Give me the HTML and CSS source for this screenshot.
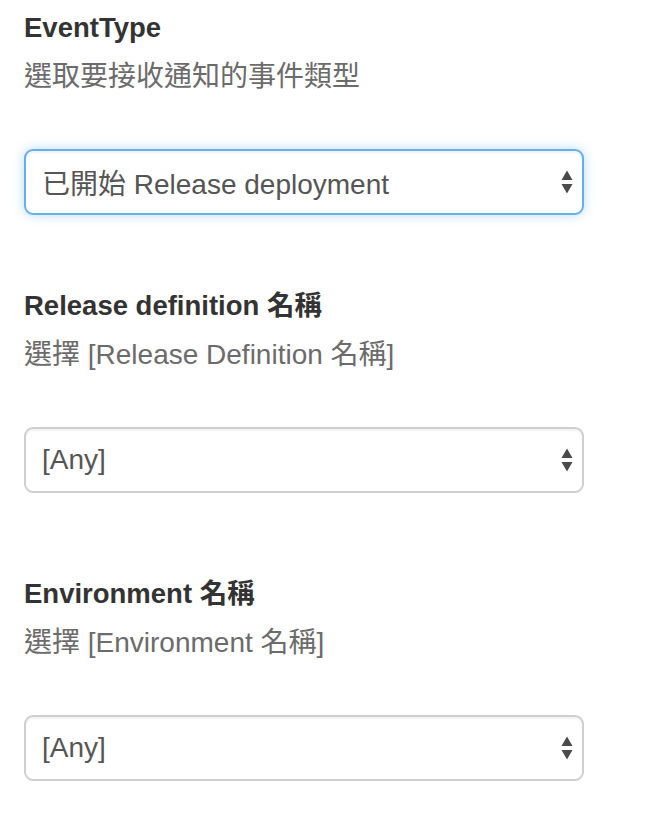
FILE: index.html
```html
<!DOCTYPE html>
<html lang="zh-Hant">
<head>
<meta charset="utf-8">
<title>Release notification settings</title>
<link rel="stylesheet" href="styles.css">
</head>
<body>
<main class="form">
  <section class="field">
    <div class="field-label">EventType</div>
    <div class="field-help">選取要接收通知的事件類型</div>
    <div class="select select--focus" role="combobox" aria-expanded="false">
      <span class="select-value">已開始 Release deployment</span>
      <svg class="select-arrows" width="14" height="26" viewBox="0 0 14 26" aria-hidden="true"><path d="M7 1.5 L12.5 11 L1.5 11 Z M1.5 15 L12.5 15 L7 24.5 Z"/></svg>
    </div>
  </section>
  <section class="field field--gap-sm">
    <div class="field-label">Release definition 名稱</div>
    <div class="field-help">選擇 [Release Definition 名稱]</div>
    <div class="select" role="combobox" aria-expanded="false">
      <span class="select-value">[Any]</span>
      <svg class="select-arrows" width="14" height="26" viewBox="0 0 14 26" aria-hidden="true"><path d="M7 1.5 L12.5 11 L1.5 11 Z M1.5 15 L12.5 15 L7 24.5 Z"/></svg>
    </div>
  </section>
  <section class="field field--gap">
    <div class="field-label">Environment 名稱</div>
    <div class="field-help">選擇 [Environment 名稱]</div>
    <div class="select" role="combobox" aria-expanded="false">
      <span class="select-value">[Any]</span>
      <svg class="select-arrows" width="14" height="26" viewBox="0 0 14 26" aria-hidden="true"><path d="M7 1.5 L12.5 11 L1.5 11 Z M1.5 15 L12.5 15 L7 24.5 Z"/></svg>
    </div>
  </section>
</main>
</body>
</html>
```
FILE: styles.css
```css
html, body {
  margin: 0;
  padding: 0;
  background: #ffffff;
}

body {
  font-family: "Liberation Sans", "Noto Sans CJK TC", "Noto Sans", sans-serif;
}

.form {
  padding: 8px 0 0 24px;
  width: 560px;
}

.field {
  display: flex;
  flex-direction: column;
}

.field--gap-sm {
  margin-top: 71px;
}

.field--gap {
  margin-top: 81px;
}

.field-label {
  font-size: 27.5px;
  font-weight: bold;
  line-height: 40px;
  color: #333333;
}

.field-help {
  margin-top: 9px;
  font-size: 28px;
  line-height: 40px;
  color: #6b6b6b;
}

.select {
  margin-top: 52px;
  height: 66px;
  box-sizing: border-box;
  border: 2px solid #cfcfcf;
  border-radius: 9px;
  box-shadow: inset 0 2px 2px rgba(0, 0, 0, 0.06);
  display: flex;
  align-items: center;
  justify-content: space-between;
  padding: 0 8px 0 16px;
  background: #ffffff;
}

.select--focus {
  border-color: #66afe9;
  box-shadow: inset 0 2px 2px rgba(0, 0, 0, 0.06), 0 0 12px rgba(102, 175, 233, 0.45);
}

.select-value {
  font-size: 28px;
  color: #555555;
  white-space: nowrap;
}

.select-arrows {
  fill: #4a4a4a;
  flex: none;
}
```
